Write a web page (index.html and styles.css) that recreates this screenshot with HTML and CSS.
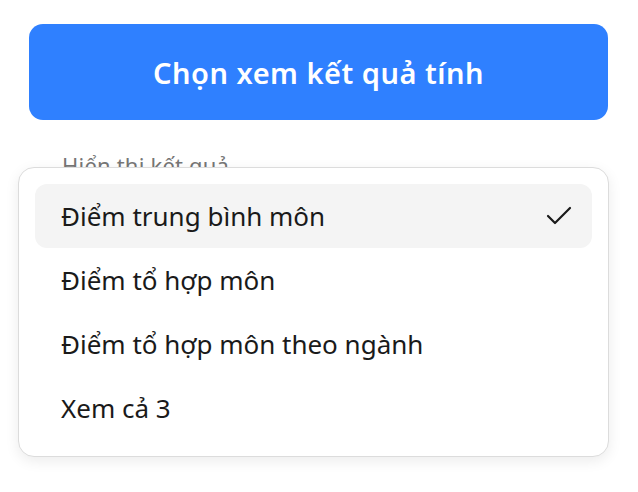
FILE: index.html
```html
<!DOCTYPE html>
<html lang="vi">
<head>
<meta charset="utf-8">
<link rel="stylesheet" href="styles.css">
</head>
<body>
<div class="page">
  <button class="primary">Chọn xem kết quả tính</button>
  <div class="field">
    <div class="label">Hiển thị kết quả</div>
  </div>
  <ul class="menu">
    <li class="item selected">
      <span>Điểm trung bình môn</span>
      <svg class="check" width="26" height="20" viewBox="0 0 26 20"><polyline points="2,10 9,17 24,2" fill="none" stroke="#1a1a1a" stroke-width="2.2" stroke-linecap="round" stroke-linejoin="round"/></svg>
    </li>
    <li class="item"><span>Điểm tổ hợp môn</span></li>
    <li class="item"><span>Điểm tổ hợp môn theo ngành</span></li>
    <li class="item"><span>Xem cả 3</span></li>
  </ul>
</div>
</body>
</html>
```
FILE: styles.css
```css
html, body {
  margin: 0;
  padding: 0;
  background: #ffffff;
  font-family: "Noto Sans", Roboto, "Liberation Sans", sans-serif;
}
.page {
  position: relative;
  padding: 24px 30px 0 29px;
  height: 492px;
  box-sizing: border-box;
}
.primary {
  display: block;
  width: 100%;
  height: 96px;
  border: none;
  border-radius: 14px;
  background: #2f80ff;
  color: #ffffff;
  font-family: "Noto Sans", Roboto, "Liberation Sans", sans-serif;
  font-size: 29px;
  font-weight: 600;
  letter-spacing: 0.5px;
  padding: 0;
}
.field {
  padding: 32px 0 0 33px;
}
.label {
  font-size: 22px;
  letter-spacing: 0.2px;
  color: #767676;
  line-height: 26px;
}
.menu {
  position: absolute;
  top: 167px;
  left: 18px;
  width: 591px;
  box-sizing: border-box;
  margin: 0;
  padding: 16px 16px;
  list-style: none;
  background: #ffffff;
  border: 1px solid #dcdcdc;
  border-radius: 16px;
  box-shadow: 0 4px 14px rgba(0,0,0,0.08);
}
.item {
  display: flex;
  align-items: center;
  justify-content: space-between;
  height: 64px;
  padding: 0 20px 0 26px;
  border-radius: 12px;
  font-size: 26px;
  color: #1a1a1a;
}
.item.selected {
  background: #f4f4f4;
}
.check {
  display: block;
}
```
